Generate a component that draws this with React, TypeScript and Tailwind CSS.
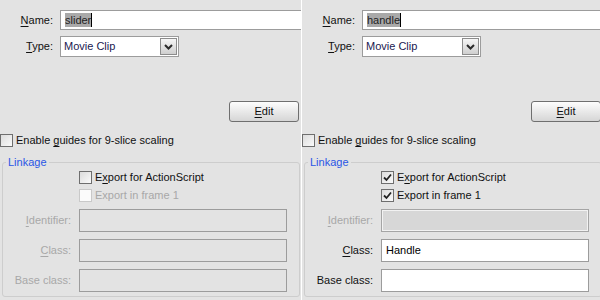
import React from 'react';

const U = ({ children }: { children: React.ReactNode }) => <span className="underline underline-offset-2">{children}</span>;

const Checkbox = ({ checked, disabled }: { checked?: boolean; disabled?: boolean }) => (
  <span
    className={`flex w-[13px] h-[13px] shrink-0 items-center justify-center border ${
      disabled ? 'border-[#c9c9c9] bg-[#fbfbfb]' : 'border-[#6e6e6e] bg-gradient-to-br from-[#dcdcdc] to-[#fafafa]'
    }`}
  >
    {checked && (
      <svg width="9" height="9" viewBox="0 0 9 9">
        <path d="M1 4.5 L3.5 7 L8 1.5" fill="none" stroke="#222" strokeWidth="1.8" />
      </svg>
    )}
  </span>
);

const Field = ({ label, value, mode, labelDisabled }: { label: React.ReactNode; value?: string; mode: 'off' | 'grey' | 'on'; labelDisabled?: boolean }) => (
  <div className="flex items-center h-[23px]">
    <span className={`w-[69px] shrink-0 pr-px text-right ${labelDisabled ? 'text-[#a8a8a8]' : 'text-[#111]'}`}>{label}</span>
    <div
      className={`ml-[7px] w-[208px] shrink-0 h-[23px] border flex items-center pl-[4px] ${
        mode === 'on'
          ? 'bg-white border-[#9c9c9c]'
          : mode === 'grey'
          ? 'bg-[#d7d7d7] border-[#a5a5a5] shadow-[inset_0_0_0_1px_#f2f2f2]'
          : 'bg-[#e3e3e3] border-[#9c9c9c]'
      }`}
    >
      {value}
    </div>
  </div>
);

const Panel = ({ name, exported, width }: { name: string; exported?: boolean; width: string }) => (
  <div className={`${width} h-[300px] shrink-0 overflow-hidden bg-[#e3e3e3] pt-[10px]`}>
    <div className="flex items-center h-[20px]">
      <span className="w-[53px] shrink-0 text-right text-[#111]">
        <U>N</U>ame:
      </span>
      <div className="ml-[7px] w-[260px] h-[20px] shrink-0 bg-white border border-[#9c9c9c] flex items-center pl-[4px]">
        <span className="bg-[#a9a9a9] text-[#222] leading-[14px]">{name}</span>
        <span className="w-px h-[14px] bg-black" />
      </div>
    </div>
    <div className="flex items-center h-[21px] mt-[6px]">
      <span className="w-[53px] shrink-0 text-right text-[#111]">
        <U>T</U>ype:
      </span>
      <div className="ml-[7px] w-[119px] shrink-0 h-[21px] bg-white border border-[#9c9c9c] flex items-center pl-[3px] pr-px justify-between">
        <span className="text-[#1a2050]">Movie Clip</span>
        <span className="w-[17px] h-[17px] border border-[#8c8c8c] bg-gradient-to-b from-[#f6f6f6] to-[#cfcfcf] flex items-center justify-center">
          <svg width="9" height="6" viewBox="0 0 9 6">
            <path d="M1 1 L4.5 4.5 L8 1" fill="none" stroke="#2a2a2a" strokeWidth="2" />
          </svg>
        </span>
      </div>
    </div>
    <div className="mt-[44px] ml-[229px] w-[70px] h-[21px] shrink-0 rounded-[3px] border border-[#6f6f6f] bg-gradient-to-b from-[#fdfdfd] to-[#d6d6d6] flex items-center justify-center text-[#111]">
      <span>
        <U>E</U>dit
      </span>
    </div>
    <div className="mt-[12px] flex items-center gap-[3px] h-[13px] text-[#111]">
      <Checkbox />
      <span>
        Enable <U>g</U>uides for 9-slice scaling
      </span>
    </div>
    <fieldset className="mt-[9px] ml-[2px] w-[298px] border border-[#cdcdcd] rounded-[3px] pb-[4px]">
      <legend className="ml-[3px] px-[2px] leading-[13px] text-[#2a56e6]">Linkage</legend>
      <div className="ml-[76px] mt-[2px] flex items-center gap-[3px] h-[13px] text-[#111]">
        <Checkbox checked={exported} />
        <span>
          E<U>x</U>port for ActionScript
        </span>
      </div>
      <div className={`ml-[76px] mt-[5px] flex items-center gap-[3px] h-[13px] ${exported ? 'text-[#111]' : 'text-[#a8a8a8]'}`}>
        <Checkbox checked={exported} disabled={!exported} />
        <span>Export in frame 1</span>
      </div>
      <div className="mt-[7px] flex flex-col gap-[7px]">
        <Field label={<><U>I</U>dentifier:</>} mode={exported ? 'grey' : 'off'} labelDisabled />
        <Field label={<><U>C</U>lass:</>} mode={exported ? 'on' : 'off'} value={exported ? 'Handle' : undefined} labelDisabled={!exported} />
        <Field label="Base class:" mode={exported ? 'on' : 'off'} labelDisabled={!exported} />
      </div>
    </fieldset>
  </div>
);

export default function App() {
  return (
    <div className="flex w-[600px] h-[300px] overflow-hidden bg-[#e3e3e3] text-[11px] leading-[13px] font-['Liberation_Sans',Arial,sans-serif]">
      <Panel name="slider" width="w-[301px]" />
      <div className="w-px h-[300px] bg-white shrink-0" />
      <Panel name="handle" exported width="w-[298px]" />
    </div>
  );
}
